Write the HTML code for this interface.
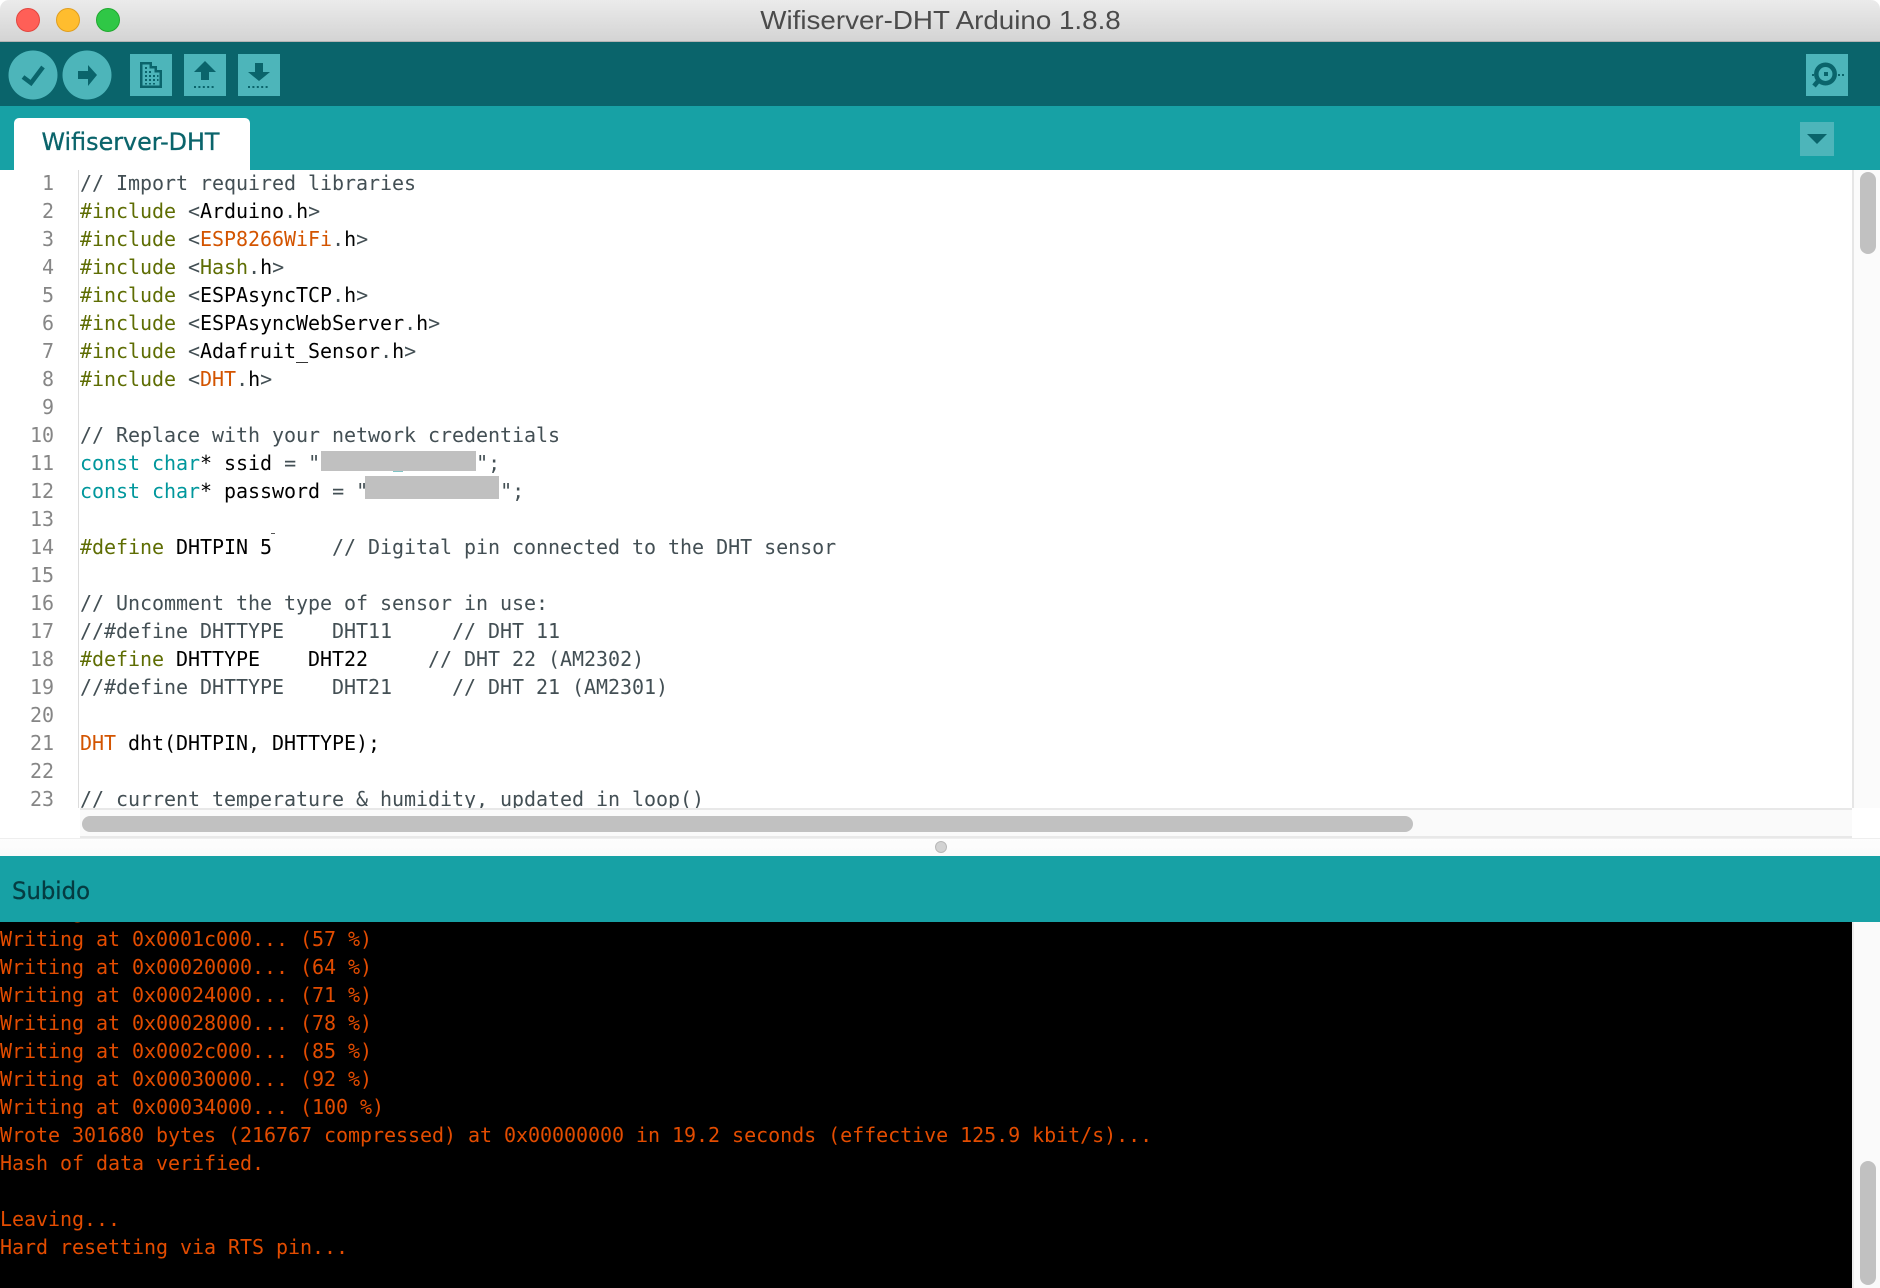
<!DOCTYPE html>
<html><head><meta charset="utf-8"><title>Wifiserver-DHT Arduino 1.8.8</title>
<style>
html,body{margin:0;padding:0;background:#fff}
body{width:1880px;height:1288px;position:relative;overflow:hidden}
.a{position:absolute}
pre{margin:0;font:20px/28px "DejaVu Sans Mono","Liberation Mono",monospace;letter-spacing:-0.04px;white-space:pre;position:absolute;filter:blur(.3px)}
.c{color:#434f54}.i{color:#5e6d03}.k{color:#d35400}.t{color:#00979c}.h{color:#5e6d03}.p{color:#434f54}
</style></head><body>
<div class="a" style="left:0;top:0;width:1880px;height:42px;background:linear-gradient(#ebebeb,#d4d4d4);border-bottom:1px solid #b4b4b4;box-sizing:border-box;border-radius:9px 9px 0 0"></div>
<div class="a" style="left:0;top:42px;width:1880px;height:64px;background:#0a646b"></div>
<div class="a" style="left:0;top:106px;width:1880px;height:64px;background:#17a1a5"></div>
<div class="a" style="left:14px;top:118px;width:236px;height:52px;background:#fff;border-radius:5px 5px 0 0"></div>

<svg class="a" style="left:0;top:0" width="1880" height="170" viewBox="0 0 1880 170">
<circle cx="28" cy="20" r="11.5" fill="#ff5f57" stroke="#e2463f" stroke-width="1"/>
<circle cx="68" cy="20" r="11.5" fill="#ffbd2e" stroke="#e09e1e" stroke-width="1"/>
<circle cx="108" cy="20" r="11.5" fill="#2fc746" stroke="#20a92f" stroke-width="1"/>
<text x="940.500" y="29" text-anchor="middle" font-family="Liberation Sans" font-size="26" fill="#4b4b4b" textLength="360.500" lengthAdjust="spacingAndGlyphs">Wifiserver-DHT Arduino 1.8.8</text>

<g fill="#4db5ba">
<circle cx="33" cy="75" r="24.5"/><circle cx="87" cy="75" r="24.5"/>
<rect x="130" y="54" width="42" height="42"/><rect x="184" y="54" width="42" height="42"/><rect x="238" y="54" width="42" height="42"/>
<rect x="1806" y="54" width="42" height="42"/><rect x="1800" y="122" width="34" height="34"/>
</g>
<g fill="#0a646b" stroke="none">
<path d="M23 77L31 83L43 67" fill="none" stroke="#0a646b" stroke-width="4.5"/>
<path d="M78 71H88V65L97 75L88 86V79H78Z"/>
<path d="M140 62H152V66H157V70H162V88H140ZM142.500 64.500V85.500H159.500V72.500H154.500V68.500H149.500V64.500Z" fill-rule="evenodd"/>
<g fill="#0a646b"><rect x="145" y="67" width="2" height="2"/><rect x="149" y="71" width="2" height="2"/><rect x="145" y="71" width="2" height="2"/><rect x="145" y="75" width="2" height="2"/><rect x="149" y="75" width="2" height="2"/><rect x="153" y="75" width="2" height="2"/><rect x="157" y="75" width="1.500" height="2"/><rect x="145" y="79" width="2" height="2"/><rect x="149" y="79" width="2" height="2"/><rect x="153" y="79" width="2" height="2"/><rect x="157" y="79" width="1.500" height="2"/><rect x="145" y="83" width="2" height="1.500"/><rect x="149" y="83" width="2" height="1.500"/><rect x="153" y="83" width="2" height="1.500"/></g>
<path d="M205 61L216 72H209V80H201V72H194Z"/>
<path d="M194 87H216" stroke="#0a646b" stroke-width="2" stroke-dasharray="2 2.400"/>
<path d="M255 63H263V72H270L259 81L248 72H255Z"/>
<path d="M248 87H270" stroke="#0a646b" stroke-width="2" stroke-dasharray="2 2.400"/>
<circle cx="1825.500" cy="74" r="9.200" fill="none" stroke="#0a646b" stroke-width="4.500"/>
<rect x="1824" y="72" width="4" height="4"/>
<path d="M1819 80L1814 86" stroke="#0a646b" stroke-width="4.500"/>
<rect x="1812" y="74" width="2" height="2"/><rect x="1838" y="74" width="2" height="2"/><rect x="1842" y="74" width="2" height="2"/>
<path d="M1807 134H1827L1817 144Z"/>
</g>
<text x="41.500" y="150" font-family="DejaVu Sans" font-size="24" fill="#0a646b" stroke="#0a646b" stroke-width=".3" textLength="178" lengthAdjust="spacingAndGlyphs">Wifiserver-DHT</text>
</svg>

<div class="a" style="left:0;top:170px;width:1852px;height:638px;overflow:hidden">
<div class="a" style="left:78px;top:0;width:1px;height:638px;background:#dcdcdc"></div>
<pre style="right:1798px;top:-1px;text-align:right;color:#868686">1
2
3
4
5
6
7
8
9
10
11
12
13
14
15
16
17
18
19
20
21
22
23</pre>
<pre style="left:80px;top:-1px;color:#000"><span class="c">// Import required libraries</span>
<span class="i">#include</span> <span class="p">&lt;</span>Arduino<span class="p">.</span>h<span class="p">&gt;</span>
<span class="i">#include</span> <span class="p">&lt;</span><span class="k">ESP8266WiFi</span><span class="p">.</span>h<span class="p">&gt;</span>
<span class="i">#include</span> <span class="p">&lt;</span><span class="h">Hash</span><span class="p">.</span>h<span class="p">&gt;</span>
<span class="i">#include</span> <span class="p">&lt;</span>ESPAsyncTCP<span class="p">.</span>h<span class="p">&gt;</span>
<span class="i">#include</span> <span class="p">&lt;</span>ESPAsyncWebServer<span class="p">.</span>h<span class="p">&gt;</span>
<span class="i">#include</span> <span class="p">&lt;</span>Adafruit_Sensor<span class="p">.</span>h<span class="p">&gt;</span>
<span class="i">#include</span> <span class="p">&lt;</span><span class="k">DHT</span><span class="p">.</span>h<span class="p">&gt;</span>

<span class="c">// Replace with your network credentials</span>
<span class="t">const</span> <span class="t">char</span>* ssid <span class="p">=</span> <span class="p">"             ";</span>
<span class="t">const</span> <span class="t">char</span>* password <span class="p">=</span> <span class="p">"           ";</span>

<span class="i">#define</span> DHTPIN 5     <span class="c">// Digital pin connected to the DHT sensor</span>

<span class="c">// Uncomment the type of sensor in use:</span>
<span class="c">//#define DHTTYPE    DHT11     // DHT 11</span>
<span class="i">#define</span> DHTTYPE    DHT22     <span class="c">// DHT 22 (AM2302)</span>
<span class="c">//#define DHTTYPE    DHT21     // DHT 21 (AM2301)</span>

<span class="k">DHT</span> dht(DHTPIN, DHTTYPE);

<span class="c">// current temperature &amp; humidity, updated in loop()</span></pre>
</div>
<div class="a" style="left:321px;top:451px;width:155px;height:20px;background:#c0c0c0"></div>
<div class="a" style="left:393px;top:471px;width:10px;height:1px;background:#7fc4c6"></div>
<div class="a" style="left:365px;top:476px;width:134px;height:23px;background:#c0c0c0"></div>
<div class="a" style="left:271px;top:533px;width:4px;height:1px;background:#555"></div>

<div class="a" style="left:1852px;top:170px;width:28px;height:638px;background:#fbfbfb;border-left:2px solid #e6e6e6;box-sizing:border-box"></div>
<div class="a" style="left:1860px;top:172px;width:16px;height:82px;background:#c1c1c1;border-radius:8px"></div>
<div class="a" style="left:80px;top:808px;width:1772px;height:30px;background:#fafafa;border-top:2px solid #e8e8e8;border-bottom:2px solid #e8e8e8;box-sizing:border-box"></div>
<div class="a" style="left:82px;top:816px;width:1331px;height:16px;background:#c1c1c1;border-radius:8px"></div>

<div class="a" style="left:0;top:838px;width:1880px;height:18px;background:linear-gradient(#fdfdfd,#fafafa);border-top:1px solid #eeeeee;box-sizing:border-box"></div>
<div class="a" style="left:935px;top:841px;width:12px;height:12px;border-radius:50%;background:#d2d2d2;border:1px solid #b8b8b8;box-sizing:border-box"></div>

<div class="a" style="left:0;top:856px;width:1880px;height:66px;background:#17a1a5"></div>
<svg class="a" style="left:0;top:856px" width="300" height="66"><text x="12" y="43" font-family="DejaVu Sans" font-size="24" fill="#053c42" stroke="#053c42" stroke-width=".3" textLength="78" lengthAdjust="spacingAndGlyphs">Subido</text></svg>

<div class="a" style="left:0;top:922px;width:1852px;height:366px;background:#000;overflow:hidden">
<pre style="left:0;top:-25px;color:#e34c00">Writing at 0x00018000... (50 %)
Writing at 0x0001c000... (57 %)
Writing at 0x00020000... (64 %)
Writing at 0x00024000... (71 %)
Writing at 0x00028000... (78 %)
Writing at 0x0002c000... (85 %)
Writing at 0x00030000... (92 %)
Writing at 0x00034000... (100 %)
Wrote 301680 bytes (216767 compressed) at 0x00000000 in 19.2 seconds (effective 125.9 kbit/s)...
Hash of data verified.

Leaving...
Hard resetting via RTS pin...</pre>
</div>
<div class="a" style="left:1852px;top:922px;width:28px;height:366px;background:#fafafa;border-left:2px solid #ececec;box-sizing:border-box"></div>
<div class="a" style="left:1860px;top:1161px;width:16px;height:124px;background:#c1c1c1;border-radius:8px"></div>
</body></html>
